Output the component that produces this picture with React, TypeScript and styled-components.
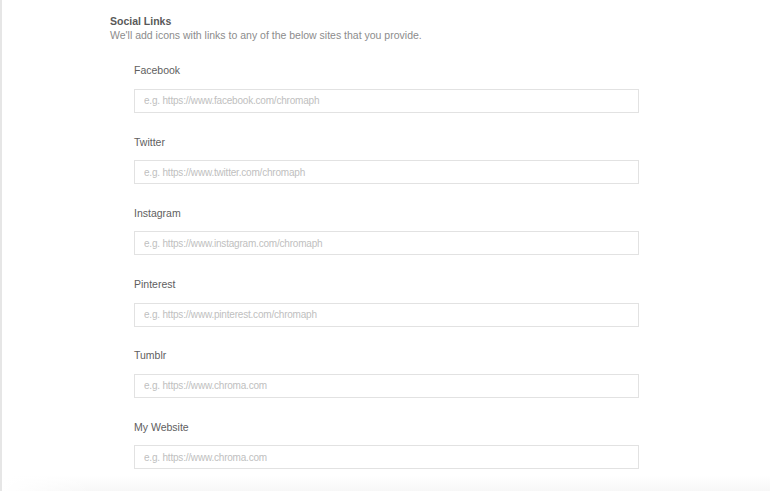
import React from "react";
import styled, { createGlobalStyle } from "styled-components";

const GlobalStyle = createGlobalStyle`
  html, body { margin: 0; padding: 0; background: #fff; }
  body { font-family: "Liberation Sans", Arial, Helvetica, sans-serif; -webkit-font-smoothing: antialiased; }
  * { box-sizing: border-box; }
`;

const Page = styled.div`
  min-height: 491px;
  border-left: 2px solid #e6e6e6;
  display: flex;
  flex-direction: column;
`;

const Section = styled.section`
  padding: 14px 0 0 108px;
`;

const Title = styled.h2`
  margin: 0;
  font-size: 10.5px;
  line-height: 14px;
  font-weight: 700;
  color: #595959;
`;

const Subtitle = styled.p`
  margin: 0;
  font-size: 10.5px;
  line-height: 14px;
  color: #8c8c8c;
`;

const Fields = styled.div`
  display: flex;
  flex-direction: column;
  gap: 21.65px;
  padding: 21.4px 0 0 24px;
`;

const Field = styled.label`
  display: flex;
  flex-direction: column;
  gap: 11.6px;
`;

const Label = styled.span`
  font-size: 10.5px;
  line-height: 14px;
  color: #606060;
`;

const Input = styled.input`
  width: 505px;
  height: 24px;
  padding: 0 8px 0 9px;
  border: 1px solid #e2e2e2;
  border-radius: 0;
  background: #fff;
  font-family: "Liberation Sans", Arial, Helvetica, sans-serif;
  font-size: 10px;
  letter-spacing: -0.2px;
  color: #444;
  outline: none;
  &::placeholder { color: #c0c0c0; }
`;

const Footer = styled.div`
  margin-top: 7px;
  flex: 1;
  background:
    linear-gradient(to right, #fff 0px, rgba(255,255,255,0) 90px),
    linear-gradient(to bottom, #fff 0%, #f7f7f7 100%);
`;

const fields = [
  { label: "Facebook", placeholder: "e.g. https://www.facebook.com/chromaph" },
  { label: "Twitter", placeholder: "e.g. https://www.twitter.com/chromaph" },
  { label: "Instagram", placeholder: "e.g. https://www.instagram.com/chromaph" },
  { label: "Pinterest", placeholder: "e.g. https://www.pinterest.com/chromaph" },
  { label: "Tumblr", placeholder: "e.g. https://www.chroma.com" },
  { label: "My Website", placeholder: "e.g. https://www.chroma.com" },
];

export default function App() {
  return (
    <>
      <GlobalStyle />
      <Page>
        <Section>
          <Title>Social Links</Title>
          <Subtitle>We'll add icons with links to any of the below sites that you provide.</Subtitle>
          <Fields>
            {fields.map((f) => (
              <Field key={f.label}>
                <Label>{f.label}</Label>
                <Input type="text" placeholder={f.placeholder} />
              </Field>
            ))}
          </Fields>
        </Section>
        <Footer />
      </Page>
    </>
  );
}
